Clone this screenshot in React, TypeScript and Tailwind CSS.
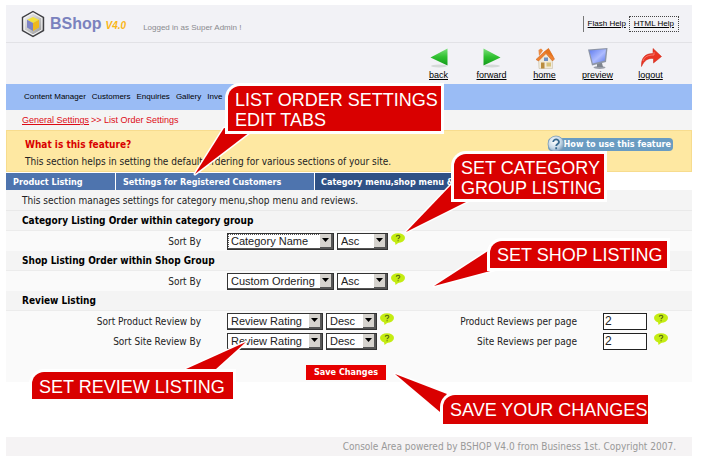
import type { ReactNode } from "react";

const ARIAL = "font-['Liberation_Sans',Arial,sans-serif]";
const VERDANA = "font-['DejaVu_Sans_Condensed','DejaVu_Sans',Verdana,sans-serif]";

function Logo() {
  return (
    <svg viewBox="0 0 24 28" className="h-[28px] w-[24px]" aria-hidden="true">
      <defs>
        <linearGradient id="shell" x1="0" y1="0" x2="1" y2="1">
          <stop offset="0" stopColor="#ffffff" />
          <stop offset="1" stopColor="#8e8e90" />
        </linearGradient>
      </defs>
      <path d="M12 1.5 22.5 7.5V20.5L12 26.5 1.5 20.5V7.5Z" fill="url(#shell)" stroke="#3e3e42" strokeWidth="1.4" />
      <path d="M12 3.2 20.8 8.2V19.8L12 24.8 3.2 19.8V8.2Z" fill="none" stroke="#f4f4f4" strokeWidth="1" />
      <path d="M12 7 18 9.800 12 13 6 9.800Z" fill="#f3e23c" />
      <path d="M6 9.800 12 13V21L6 17.500Z" fill="#7d83c4" />
      <path d="M18 9.800 12 13V21L18 17.500Z" fill="#f0b81c" />
    </svg>
  );
}

function GreenArrow({ flip }: { flip?: boolean }) {
  return (
    <svg viewBox="0 0 20 22" className="h-[22px] w-[20px]" aria-hidden="true">
      <defs>
        <linearGradient id="leaf" x1="0" y1="0" x2="0" y2="1">
          <stop offset="0" stopColor="#7be07a" />
          <stop offset="0.5" stopColor="#2fc02f" />
          <stop offset="1" stopColor="#149a1b" />
        </linearGradient>
      </defs>
      <ellipse cx="10" cy="19" rx="8" ry="1.5" fill="#d5d9d8" />
      <path d={flip ? "M1.5 1.500 18.500 10.500 1.500 18.500Z" : "M18.500 1.500 1.500 10.500 18.500 18.500Z"} fill="url(#leaf)" />
    </svg>
  );
}

function HomeIcon() {
  return (
    <svg viewBox="0 0 20 22" className="h-[22px] w-[20px]" aria-hidden="true">
      <path d="M3.500 12 11 6.500 17.500 13V21.500H4Z" fill="#f1ead9" stroke="#c9bfa8" strokeWidth="0.6" />
      <path d="M3.500 3 6 1.500 8 3.500 4 9Z" fill="#e98b45" />
      <path d="M9 5 13.500 1.500 19.500 12 17.500 14 11 6.500 3.500 14 1 12.500Z" fill="#ef8130" stroke="#c55f18" strokeWidth="0.5" />
      <path d="M9 5 13.500 1.500 18.500 10 11.500 6Z" fill="#e4741f" />
      <rect x="9" y="10.500" width="4" height="3.500" fill="#6f8fc4" />
      <rect x="6" y="15.500" width="3.500" height="6" fill="#b98c3f" />
      <rect x="11.500" y="15.500" width="4.500" height="4" fill="#d8c27a" />
    </svg>
  );
}

function MonitorIcon() {
  return (
    <svg viewBox="0 0 22 22" className="h-[22px] w-[22px]" aria-hidden="true">
      <defs>
        <linearGradient id="screen" x1="0" y1="0" x2="1" y2="1">
          <stop offset="0" stopColor="#5f7cf0" />
          <stop offset="0.55" stopColor="#aebcff" />
          <stop offset="1" stopColor="#5b78e8" />
        </linearGradient>
      </defs>
      <ellipse cx="12.500" cy="20.500" rx="6" ry="1.500" fill="#9a9ea8" />
      <path d="M10 16H15L16 20H10Z" fill="#7f858f" />
      <path d="M1 2.500 20.500 1 19 15 5 18.500Z" fill="#8d95a6" />
      <path d="M2.500 3.500 19 2.200 17.800 13.500 5.800 16.500Z" fill="url(#screen)" />
    </svg>
  );
}

function LogoutIcon() {
  return (
    <svg viewBox="0 0 22 22" className="h-[22px] w-[22px]" aria-hidden="true">
      <path d="M1.500 19.500C1 11 5 6.500 13 6.500V1.500L21.500 9.500 13.500 16V11.500C8 11 4.500 13 1.500 19.500Z" fill="#ea3524" stroke="#c9200f" strokeWidth="0.5" />
      <path d="M3 14C4.500 9.500 8 8 14 8V5" fill="none" stroke="#f9897c" strokeWidth="0.8" />
    </svg>
  );
}

function HelpBubble() {
  return (
    <button type="button" aria-label="Help" className="mb-1 h-[13px] w-[14px] shrink-0">
      <svg viewBox="0 0 14 13" className="h-[13px] w-[14px]" aria-hidden="true">
        <ellipse cx="7" cy="5" rx="7" ry="4.800" fill="#c4ec12" />
        <path d="M4 8.500 4.500 12 8.500 9Z" fill="#c4ec12" />
        <path d="M5.300 3.800C5.300 1.900 8.900 1.900 8.900 3.800 8.900 5 7.100 5 7.100 6.300M7.100 7.200V8.300" fill="none" stroke="#5d7213" strokeWidth="1.100" />
      </svg>
    </button>
  );
}

function Pick({ label, value, width, dotted }: { label: string; value: string; width: string; dotted?: boolean }) {
  return (
    <span className={`grid h-[17px] shrink-0 border border-[#333] bg-white shadow-[inset_-1px_-1px_0_#555] ${width}`}>
      <select
        aria-label={label}
        className={`${ARIAL} col-start-1 row-start-1 min-w-0 appearance-none bg-transparent pl-[3px] text-[11px] leading-[15px] text-[#222] ${dotted ? "outline outline-dotted -outline-offset-1 outline-[#555]" : "outline-none"}`}
      >
        <option>{value}</option>
      </select>
      <span className="pointer-events-none col-start-1 row-start-1 flex h-[15px] w-[13px] items-center justify-center justify-self-end border-r-2 border-b-2 border-[#555] bg-[#d6d3ce]">
        <svg viewBox="0 0 7 4" className="h-[4px] w-[7px]" aria-hidden="true">
          <path d="M0 0H7L3.500 4Z" fill="#000" />
        </svg>
      </span>
    </span>
  );
}

function Heading({ children }: { children: ReactNode }) {
  return (
    <h2 className="flex h-5 items-center border-b border-[#ececec] bg-[#f4f4f4] pl-4 text-[10px] font-bold text-black">
      {children}
    </h2>
  );
}

type SortRowProps = {
  label: string;
  field: string;
  fieldWidth: string;
  order: string;
  focused?: boolean;
  page?: string;
};

function SortRow({ label, field, fieldWidth, order, focused, page }: SortRowProps) {
  return (
    <div className="grid h-5 grid-cols-[221fr_184fr_192fr_89fr] items-center">
      <span className="pr-[26px] text-right text-[10px]">{label}</span>
      <div className="flex items-center gap-[3px]">
        <Pick label={label} value={field} width={fieldWidth} dotted={focused} />
        <Pick label={`${label} direction`} value={order} width="w-[51px]" />
        <HelpBubble />
      </div>
      {page && (
        <>
          <label htmlFor={page} className="pr-[26px] text-right text-[10px]">{page}</label>
          <div className="flex items-center gap-[7px]">
            <input
              id={page}
              defaultValue="2"
              className={`${ARIAL} h-[17px] w-[44px] border border-[#222] bg-white pl-px text-[12px] leading-[15px] text-[#222]`}
            />
            <HelpBubble />
          </div>
        </>
      )}
    </div>
  );
}

function Callout({ place, box, tail, children }: { place: string; box: string; tail: string; children: ReactNode }) {
  return (
    <div className={`absolute ${place}`}>
      <svg className="absolute top-0 left-0 h-px w-px overflow-visible" aria-hidden="true">
        <path d={tail} fill="#d90000" stroke="#fff" strokeWidth="3" strokeLinejoin="round" />
        <path d={tail} fill="#d90000" />
      </svg>
      <p className={`${ARIAL} relative rounded-tl-[12px] bg-[#d90000] pl-[7px] text-[18px] leading-[20px] whitespace-nowrap text-white shadow-[0_0_0_3px_#fff] ${box}`}>
        {children}
      </p>
    </div>
  );
}

const menu = ["Content Manager", "Customers", "Enquiries", "Gallery", "Inve"];

const tools = [
  { name: "back", icon: <GreenArrow /> },
  { name: "forward", icon: <GreenArrow flip /> },
  { name: "home", icon: <HomeIcon /> },
  { name: "preview", icon: <MonitorIcon /> },
  { name: "logout", icon: <LogoutIcon /> },
];

export default function App() {
  return (
    <div className={`${VERDANA} relative overflow-hidden bg-white pt-[5px] pr-[10px] pb-[5px] pl-[6px] text-[#222]`}>
      <header className={`${ARIAL} bg-[#f2f2f6]`}>
        <div className="flex h-[38px] items-center border-b border-[#e2e2e6] pl-[15px]">
          <Logo />
          <h1 className="pl-[5px] text-[16px] font-bold text-[#7b82be]">BShop</h1>
          <span className="pt-1 pl-1 text-[10px] font-bold text-[#f9b618] italic">V4.0</span>
          <span className="pt-2 pl-[17px] text-[8px] text-[#8a8a8e]">Logged in as Super Admin !</span>
          <div className="ml-auto flex items-center gap-[3px] pr-[13px] text-[8px] text-black">
            <a href="#flash" className="border-l border-[#777] py-[2px] pl-1 underline">Flash Help</a>
            <a href="#html" className="border border-dotted border-[#444] px-1 py-px underline">HTML Help</a>
          </div>
        </div>
        <nav aria-label="Tools" className="flex h-[41px] justify-end pt-1 pr-[15px]">
          {tools.map((t) => (
            <a key={t.name} href={`#${t.name}`} className="flex w-[53px] flex-col items-center text-[9px] leading-[13px] text-black underline">
              {t.icon}
              {t.name}
            </a>
          ))}
        </nav>
      </header>

      <nav aria-label="Main" className={`${ARIAL} flex h-[26px] items-center gap-[6px] bg-[#9abcf5] pl-[18px] text-[8px] text-black`}>
        {menu.map((m) => (
          <a key={m} href="#menu">{m}</a>
        ))}
      </nav>

      <div className={`${ARIAL} flex h-[20px] items-center gap-[2px] bg-[#f4f4f4] pt-[2px] pl-4 text-[9px] text-[#dd0a14]`}>
        <a href="#settings" className="underline">General Settings</a>
        <span>&gt;&gt; List Order Settings</span>
      </div>

      <section className="flex h-[42px] justify-between border border-[#f7dc8e] bg-[#fee8a2] pt-[7px] pr-[18px] pl-[18px]">
        <div>
          <h2 className="text-[10px] leading-[14px] font-bold text-[#d90000]">What is this feature?</h2>
          <p className="pt-[2px] text-[10px] leading-[16px]">This section helps in setting the default ordering for various sections of your site.</p>
        </div>
        <button type="button" className="relative h-[13px] rounded-[4px] bg-[#6a9cc2] pr-[2px] pl-4 text-[9px] leading-[13px] font-bold text-white">
          <svg viewBox="0 0 18 18" className="absolute -top-[3px] -left-[1px] h-[18px] w-[18px]" aria-hidden="true">
            <defs>
              <radialGradient id="glass" cx="0.4" cy="0.35" r="0.7">
                <stop offset="0" stopColor="#ffffff" />
                <stop offset="0.6" stopColor="#c3d6e6" />
                <stop offset="1" stopColor="#6f93b3" />
              </radialGradient>
            </defs>
            <circle cx="9" cy="9" r="8" fill="url(#glass)" stroke="#7f9db8" strokeWidth="0.800" />
            <path d="M6.200 7C6.200 3.600 12 3.600 12 7 12 9 9.200 8.800 9.200 11M9.200 12.300V14.200" fill="none" stroke="#38698f" strokeWidth="1.800" />
          </svg>
          How to use this feature
        </button>
      </section>

      <div role="tablist" className="mt-px flex h-[17px] gap-px pr-[152px] text-[9px] leading-[16px] font-bold text-white">
        <button type="button" role="tab" className="w-[109px] shrink-0 bg-[#4e74ae] pl-[7px] text-left">Product Listing</button>
        <button type="button" role="tab" className="w-[198px] shrink-0 bg-[#4e74ae] pl-[7px] text-left">Settings for Registered Customers</button>
        <button type="button" role="tab" aria-selected="true" className="w-[141px] shrink-0 overflow-hidden bg-[#2f5186] pl-[6px] text-left whitespace-nowrap">Category menu,shop menu &amp;</button>
      </div>

      <main className="bg-[#fafafa]">
        <p className="flex h-[21px] items-center border-b border-[#e9e9e9] bg-[#f4f4f4] pl-4 text-[10px]">
          This section manages settings for category menu,shop menu and reviews.
        </p>
        <Heading>Category Listing Order within category group</Heading>
        <SortRow label="Sort By" field="Category Name" fieldWidth="w-[107px]" order="Asc" focused />
        <Heading>Shop Listing Order within Shop Group</Heading>
        <SortRow label="Sort By" field="Custom Ordering" fieldWidth="w-[107px]" order="Asc" />
        <Heading>Review Listing</Heading>
        <SortRow label="Sort Product Review by" field="Review Rating" fieldWidth="w-[96px]" order="Desc" page="Product Reviews per page" />
        <SortRow label="Sort Site Review By" field="Review Rating" fieldWidth="w-[96px]" order="Desc" page="Site Reviews per page" />
        <div className="flex justify-center pt-[14px] pr-[6px] pb-[2px]">
          <button type="button" className="h-[15px] w-[80px] bg-[#e60000] text-[9px] leading-[15px] font-bold text-white">Save Changes</button>
        </div>
      </main>

      <footer className="mt-[55px] flex h-[19px] items-center justify-end bg-[#f5f3f4] pr-4 text-[10px] text-[#999]">
        Console Area powered by BSHOP V4.0 from Business 1st. Copyright 2007.
      </footer>

      <Callout place="top-[86px] left-[228px]" box="h-[45px] w-[213px] pt-1" tail="M-33 88 -4 42 22 46Z">
        LIST ORDER SETTINGS
        <br />
        EDIT TABS
      </Callout>
      <Callout place="top-[154px] left-[454px]" box="h-[45px] w-[150px] pt-1" tail="M-48 78 -2 30 14 47Z">
        SET CATEGORY
        <br />
        GROUP LISTING
      </Callout>
      <Callout place="top-[241px] left-[490px]" box="h-[27px] w-[177px] pt-1" tail="M-56 45 -2 10 4 29Z">
        SET SHOP LISTING
      </Callout>
      <Callout place="top-[372px] left-[32px]" box="h-[27px] w-[201px] pt-[5px]" tail="M214 -30 154 -3 184 -3Z">
        SET REVIEW LISTING
      </Callout>
      <Callout place="top-[395px] left-[443px]" box="h-[29px] w-[205px] pt-[5px]" tail="M-48 -21 4 -1 -3 17Z">
        SAVE YOUR CHANGES
      </Callout>
    </div>
  );
}
